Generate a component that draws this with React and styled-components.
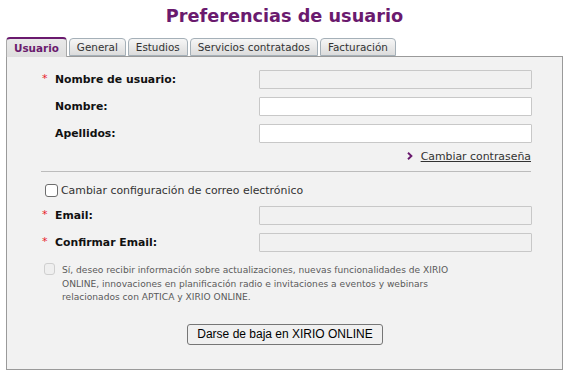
import React from "react";
import styled, { createGlobalStyle } from "styled-components";

const GlobalStyle = createGlobalStyle`
  body {
    margin: 0;
    background: #ffffff;
    font-family: "DejaVu Sans", Verdana, sans-serif;
  }
`;

export const Page = styled.div`
  width: 570px;
  height: 378px;
  box-sizing: border-box;
  padding: 0 7px 0 6px;
`;

export const Title = styled.h1`
  margin: 0;
  height: 37px;
  line-height: 32px;
  text-align: center;
  font-size: 17.7px;
  font-weight: bold;
  color: #6a1a6e;
`;

export const Tabs = styled.ul`
  display: flex;
  align-items: flex-end;
  gap: 2px;
  margin: 0;
  padding: 0;
  list-style: none;
  height: 19px;
  position: relative;
  z-index: 1;
`;

export const Tab = styled.li`
  box-sizing: border-box;
  height: ${p => (p.$active ? "20px" : "18px")};
  margin-bottom: ${p => (p.$active ? "-1px" : "0")};
  padding: 0 ${p => p.$pad || 7}px;
  display: flex;
  align-items: center;
  font-size: 10.4px;
  font-weight: ${p => (p.$active ? "bold" : "normal")};
  color: ${p => (p.$active ? "#6a1a6e" : "#333")};
  border: 1px solid ${p => (p.$active ? "#a9a9a9" : "#a5b0b8")};
  border-top: ${p => (p.$active ? "2px solid #6a1a6e" : "1px solid #a5b0b8")};
  border-bottom: ${p => (p.$active ? "none" : "1px solid #a5b0b8")};
  border-radius: 4px 4px 0 0;
  background: ${p =>
    p.$active
      ? "linear-gradient(#e9e9e9, #dedede)"
      : "linear-gradient(#f6f6f6, #dcdcdc)"};
`;

export const Panel = styled.div`
  box-sizing: border-box;
  height: 314px;
  border: 1px solid #9a9a9a;
  background: #f2f2f2;
  padding: 13px 31px 0 35px;
`;

export const Row = styled.div`
  display: grid;
  grid-template-columns: 13px 204px 1fr;
  align-items: center;
  height: 19px;
  margin-bottom: 8px;
`;

export const Star = styled.span`
  color: #e8202a;
  font-size: 11px;
  line-height: 1;
  align-self: start;
  padding-top: 3px;
`;

export const Label = styled.label`
  font-size: 10.85px;
  font-weight: bold;
  color: #111;
`;

export const Input = styled.input`
  box-sizing: border-box;
  width: 273px;
  height: 19px;
  margin: 0;
  border: 1px solid #c8c8c8;
  border-radius: 1px;
  background: ${p => (p.disabled ? "#f1f1f1" : "#ffffff")};
  outline: none;
`;

export const LinkRow = styled.div`
  display: flex;
  justify-content: flex-end;
  align-items: center;
  gap: 8px;
  height: 14px;
  margin-top: -2px;
  font-size: 10.9px;
  color: #333;
`;

export const Chevron = styled.svg`
  width: 6px;
  height: 8px;
`;

export const Link = styled.a`
  color: #333;
  text-decoration: underline;
`;

export const Separator = styled.hr`
  margin: 8px 0 0 -1px;
  border: none;
  border-top: 1px solid #bcbcbc;
  height: 0;
`;

export const CheckRow = styled.label`
  display: flex;
  align-items: center;
  gap: 3px;
  height: 15px;
  margin: 11px 0 8px 3px;
  font-size: 10.9px;
  color: #333;
`;

export const Box = styled.span`
  box-sizing: border-box;
  display: inline-block;
  flex: none;
  width: ${p => (p.$small ? 11 : 13)}px;
  height: ${p => (p.$small ? 12 : 13)}px;
  border: 1px solid ${p => (p.$disabled ? "#cfcfcf" : "#6d6d6d")};
  border-radius: 3px;
  background: ${p => (p.$disabled ? "#efefef" : "#ffffff")};
`;

export const Consent = styled.div`
  display: flex;
  align-items: flex-start;
  gap: 7px;
  margin: 11px 0 0 2px;
`;

export const ConsentText = styled.p`
  margin: 0;
  padding-top: 1px;
  font-size: 9.1px;
  line-height: 13.5px;
  color: #5a5a5a;
`;

export const ButtonBar = styled.div`
  display: flex;
  justify-content: center;
  margin: 19px 0 0 -3px;
`;

export const Button = styled.button`
  box-sizing: border-box;
  height: 21px;
  padding: 0 9px;
  font-family: "Liberation Sans", Arial, sans-serif;
  font-size: 12px;
  color: #000;
  background: #f0f0f0;
  border: 1px solid #767676;
  border-radius: 3px;
`;

const tabs = [
  { name: "Usuario", active: true, pad: 7 },
  { name: "General", pad: 7 },
  { name: "Estudios", pad: 7 },
  { name: "Servicios contratados", pad: 7 },
  { name: "Facturación", pad: 7 }
];

function Field({ label, required, disabled }) {
  return (
    <Row>
      <Star>{required ? "*" : ""}</Star>
      <Label>{label}</Label>
      <Input disabled={disabled} />
    </Row>
  );
}

export default function App() {
  return (
    <Page>
      <GlobalStyle />
      <Title>Preferencias de usuario</Title>
      <Tabs>
        {tabs.map(t => (
          <Tab key={t.name} $active={t.active} $pad={t.pad}>
            {t.name}
          </Tab>
        ))}
      </Tabs>
      <Panel>
        <Field label="Nombre de usuario:" required disabled />
        <Field label="Nombre:" />
        <Field label="Apellidos:" />
        <LinkRow>
          <Chevron viewBox="0 0 6 8">
            <path d="M1 0.8 L4.4 4 L1 7.2" fill="none" stroke="#6a1a6e" strokeWidth="1.9" />
          </Chevron>
          <Link href="#">Cambiar contraseña</Link>
        </LinkRow>
        <Separator />
        <CheckRow>
          <Box />
          Cambiar configuración de correo electrónico
        </CheckRow>
        <Field label="Email:" required disabled />
        <Field label="Confirmar Email:" required disabled />
        <Consent>
          <Box $small $disabled />
          <ConsentText>
            Sí, deseo recibir información sobre actualizaciones, nuevas funcionalidades de XIRIO
            <br />
            ONLINE, innovaciones en planificación radio e invitaciones a eventos y webinars
            <br />
            relacionados con APTICA y XIRIO ONLINE.
          </ConsentText>
        </Consent>
        <ButtonBar>
          <Button>Darse de baja en XIRIO ONLINE</Button>
        </ButtonBar>
      </Panel>
    </Page>
  );
}
